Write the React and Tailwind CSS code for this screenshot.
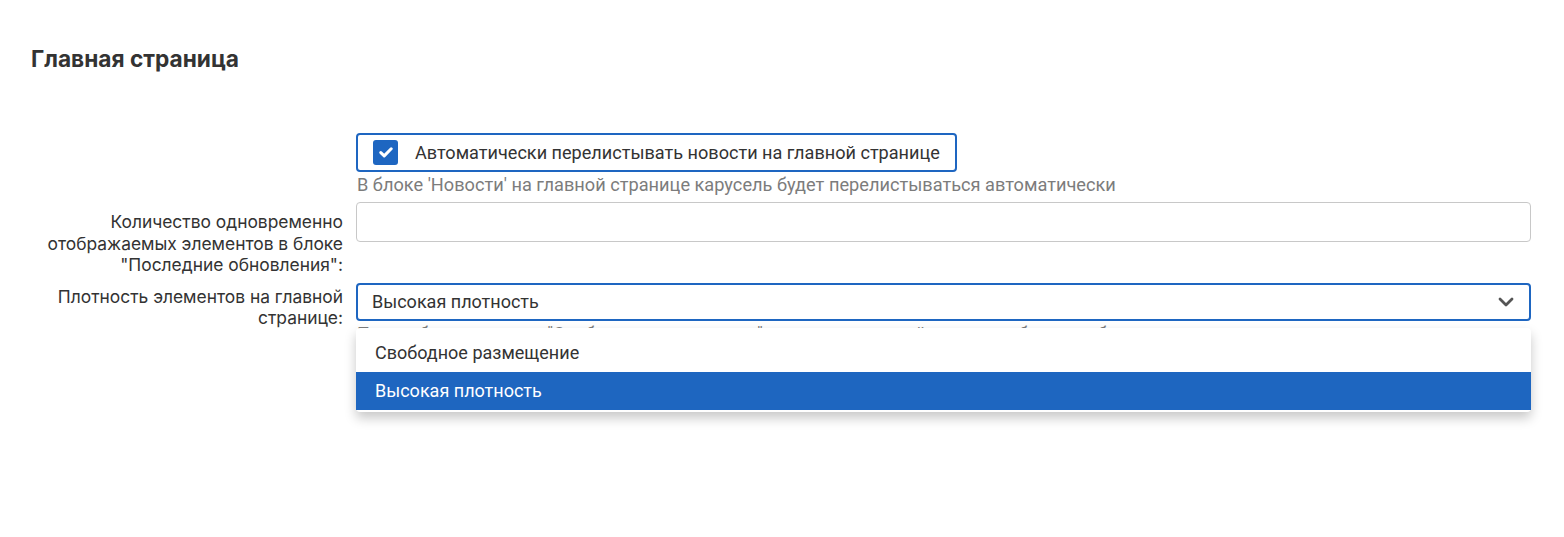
import { useState } from 'react'

const OPTIONS = ['Свободное размещение', 'Высокая плотность']

function Chevron() {
  return (
    <svg width="16" height="10" viewBox="0 0 16 10" fill="none">
      <path d="M2 2l6 6 6-6" stroke="#555" strokeWidth="2.8" strokeLinecap="round" strokeLinejoin="round" />
    </svg>
  )
}

export default function App() {
  const [auto, setAuto] = useState(true)
  const [density, setDensity] = useState('Высокая плотность')
  const [open, setOpen] = useState(true)

  return (
    <div className="min-h-[537px] bg-white pl-[31px] pr-[33px] pt-[44px] text-[#333] font-['Roboto',sans-serif]">
      <h2 className="text-[22.7px] font-bold leading-[30px] font-['Inter',sans-serif] text-[#333]">Главная страница</h2>

      <div className="mt-[59px] grid grid-cols-[312px_1fr] gap-x-[13px]">
        {/* Auto-scroll checkbox */}
        <div />
        <div>
          <label className="inline-flex h-[39px] items-center gap-[17px] rounded-[4px] border-2 border-[#1e66c1] pl-[15px] pr-[15px] cursor-pointer">
            <span
              onClick={() => setAuto(!auto)}
              className={`flex h-[25px] w-[25px] items-center justify-center rounded-[3px] ${auto ? 'bg-[#1e66c1]' : 'border border-gray-400 bg-white'}`}
            >
              {auto && (
                <svg width="14" height="11" viewBox="0 0 14 11" fill="none">
                  <path d="M1.8 5.6l3.4 3.3L12.2 1.8" stroke="white" strokeWidth="3" strokeLinecap="round" strokeLinejoin="round" />
                </svg>
              )}
            </span>
            <span className="text-[18.1px] leading-[20px] text-[#333]">Автоматически перелистывать новости на главной странице</span>
          </label>
          <p className="mt-[2px] pl-[1px] text-[18.2px] leading-[22px] text-[#7c7c7c]">В блоке 'Новости' на главной странице карусель будет перелистываться автоматически</p>
        </div>

        {/* Count input */}
        <label className="mt-[8px] pt-[7px] text-right text-[17.4px] leading-[21.5px] font-['Inter',sans-serif] text-[#333]">
          Количество одновременно отображаемых элементов в блоке "Последние обновления":
        </label>
        <div className="mt-[6px]">
          <input type="text" className="h-[40px] w-full rounded-[4px] border border-[#c8c8c8] px-3 text-[18px] outline-none" />
        </div>

        {/* Density select */}
        <label className="mt-[7px] pt-[3px] text-right text-[17.4px] leading-[21.5px] font-['Inter',sans-serif] text-[#333]">
          Плотность элементов на главной странице:
        </label>
        <div className="relative mt-[7px]">
          <button
            onClick={() => setOpen(!open)}
            className="flex h-[38px] w-full items-center justify-between rounded-[4px] border-2 border-[#1e66c1] pl-[14px] pr-[15px] text-left"
          >
            <span className="text-[18px] text-[#333]">{density}</span>
            <Chevron />
          </button>
          <p className="mt-[2px] pl-[1px] text-[18px] leading-[22px] text-[#7c7c7c] whitespace-nowrap overflow-hidden">
            При выборе значения "Свободное размещение" элементы главной страницы будут отображаться с увеличенными отступами
          </p>
          {open && (
            <ul className="absolute left-0 right-0 top-[45px] z-10 rounded-[4px] bg-white pt-[6px] pb-[2px] shadow-[0_6px_12px_rgba(0,0,0,0.22)]">
              {OPTIONS.map(o => (
                <li
                  key={o}
                  onClick={() => { setDensity(o); setOpen(false) }}
                  className={`flex h-[38px] items-center pl-[19px] text-[18px] cursor-pointer ${density === o ? 'bg-[#1e66c0] text-white' : 'text-[#333]'}`}
                >
                  {o}
                </li>
              ))}
            </ul>
          )}
        </div>
      </div>
    </div>
  )
}
